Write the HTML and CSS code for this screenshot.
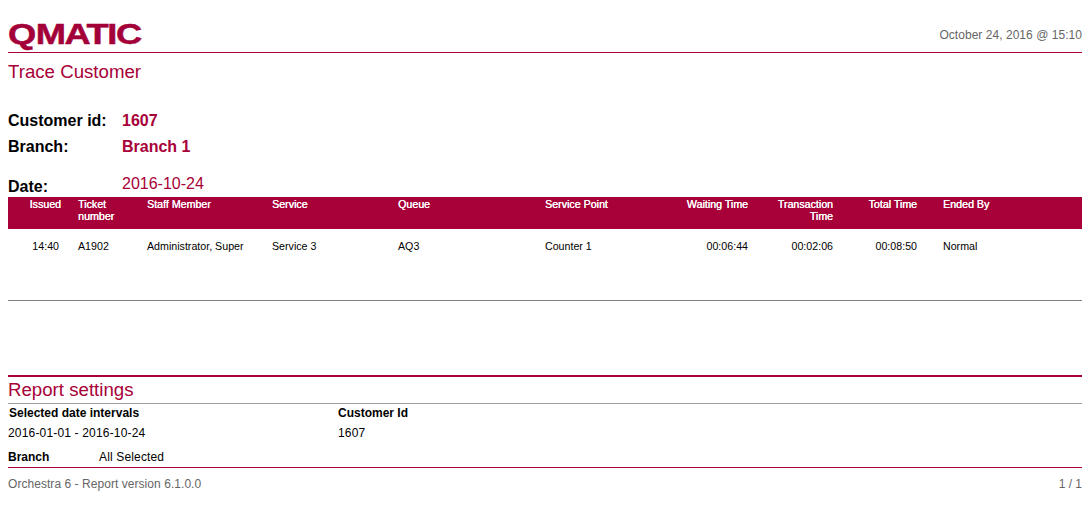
FILE: index.html
```html
<!DOCTYPE html>
<html lang="en">
<head>
<meta charset="utf-8">
<title>Trace Customer</title>
<link rel="stylesheet" href="styles.css">
</head>
<body>
<header class="top">
  <div class="logo"><span class="logo-q">Q</span>MATIC</div>
  <div class="stamp">October 24, 2016 @ 15:10</div>
</header>
<h1 class="title">Trace Customer</h1>
<section class="meta">
  <div class="meta-row"><span class="meta-label">Customer id:</span><span class="meta-value">1607</span></div>
  <div class="meta-row"><span class="meta-label">Branch:</span><span class="meta-value">Branch 1</span></div>
  <div class="meta-row date-row"><span class="meta-label">Date:</span><span class="meta-date">2016-10-24</span></div>
</section>
<section class="table">
  <div class="row head">
    <div class="num">Issued</div>
    <div class="ticket">Ticket number</div>
    <div>Staff Member</div>
    <div>Service</div>
    <div>Queue</div>
    <div>Service Point</div>
    <div class="num">Waiting Time</div>
    <div class="num">Transaction Time</div>
    <div class="num">Total Time</div>
    <div class="last">Ended By</div>
  </div>
  <div class="row body-row">
    <div class="num issued">14:40</div>
    <div>A1902</div>
    <div>Administrator, Super</div>
    <div>Service 3</div>
    <div>AQ3</div>
    <div>Counter 1</div>
    <div class="num">00:06:44</div>
    <div class="num">00:02:06</div>
    <div class="num">00:08:50</div>
    <div class="last">Normal</div>
  </div>
</section>
<section class="settings">
  <h2 class="settings-title">Report settings</h2>
  <div class="settings-grid">
    <div class="settings-cell">
      <div class="s-label">Selected date intervals</div>
      <div class="s-value">2016-01-01 - 2016-10-24</div>
    </div>
    <div class="settings-cell">
      <div class="s-label">Customer Id</div>
      <div class="s-value">1607</div>
    </div>
  </div>
  <div class="branch-row"><span class="branch-label">Branch</span><span class="branch-value">All Selected</span></div>
</section>
<footer class="foot">
  <span class="foot-text">Orchestra 6 - Report version 6.1.0.0</span>
  <span>1 / 1</span>
</footer>
</body>
</html>
```
FILE: styles.css
```css
html, body { margin: 0; padding: 0; }
body {
  width: 1074px;
  padding-left: 8px;
  font-family: "Liberation Sans", Arial, sans-serif;
  color: #000;
  background: #fff;
  overflow: hidden;
}
.top {
  display: flex;
  justify-content: space-between;
  align-items: flex-end;
  height: 52px;
  border-bottom: 1px solid #a80038;
}
.logo {
  font-family: "Liberation Sans", Arial, sans-serif;
  font-weight: 700;
  font-size: 30px;
  line-height: 30px;
  letter-spacing: -1.2px;
  color: #a3003a;
  margin-bottom: 3px;
  -webkit-text-stroke: 0.5px #a3003a;
  transform: scaleX(1.21);
  transform-origin: left center;
}
.logo-q { letter-spacing: -0.4px; }
.stamp {
  font-size: 12px;
  line-height: 14px;
  letter-spacing: 0.04px;
  color: #666;
  margin-bottom: 10px;
}
.title {
  margin: 9px 0 0;
  font-size: 18.67px;
  font-weight: 400;
  line-height: 20px;
  color: #a80038;
}
.meta { margin-top: 26px; }
.meta-row {
  display: flex;
  height: 26px;
  align-items: center;
  font-size: 16px;
  font-weight: 700;
}
.meta-label { width: 114px; }
.meta-value { color: #a80038; }
.date-row {
  height: 20px;
  margin-top: 18px;
  align-items: flex-start;
}
.meta-date {
  font-weight: 400;
  color: #a80038;
  position: relative;
  top: -3px;
}
.table { border-bottom: 1px solid #808080; height: 103px; margin-top: -1px; }
.row {
  display: grid;
  grid-template-columns: 70px 69px 125px 126px 147px 125px 95px 85px 84px 1fr;
  font-size: 10.67px;
  line-height: 12px;
}
.head {
  background: #a80038;
  color: #fff;
  height: 32px;
  padding-top: 1px;
  box-sizing: border-box;
  text-shadow: 0.3px 0 0 #fff;
}
.body-row { padding-top: 11px; }
.num { text-align: right; padding-right: 17px; }
.row .issued { padding-right: 19px; }
.row .last { padding-left: 9px; }
.ticket { padding-right: 20px; }
.settings { margin-top: 74px; border-top: 2px solid #a80038; }
.settings-title {
  margin: 0;
  font-size: 18.67px;
  font-weight: 400;
  line-height: 26px;
  color: #a80038;
  border-bottom: 1px solid #a0a0a0;
  height: 26px;
}
.settings-grid { display: grid; grid-template-columns: 330px 1fr; }
.s-label {
  font-size: 12px;
  font-weight: 700;
  line-height: 16px;
  padding-top: 1px;
  padding-left: 1px;
}
.settings-cell + .settings-cell .s-label { padding-left: 0; }
.s-value { font-size: 12px; line-height: 14px; margin-top: 5px; letter-spacing: 0.17px; }
.branch-row {
  display: flex;
  font-size: 12px;
  line-height: 14px;
  margin-top: 10px;
  padding-bottom: 3px;
  border-bottom: 1px solid #a80038;
}
.branch-label { width: 91px; font-weight: 700; }
.branch-value { letter-spacing: 0.15px; }
.foot {
  display: flex;
  justify-content: space-between;
  font-size: 12px;
  line-height: 14px;
  color: #666;
  margin-top: 9px;
}
.foot-text { letter-spacing: 0.05px; }
```
